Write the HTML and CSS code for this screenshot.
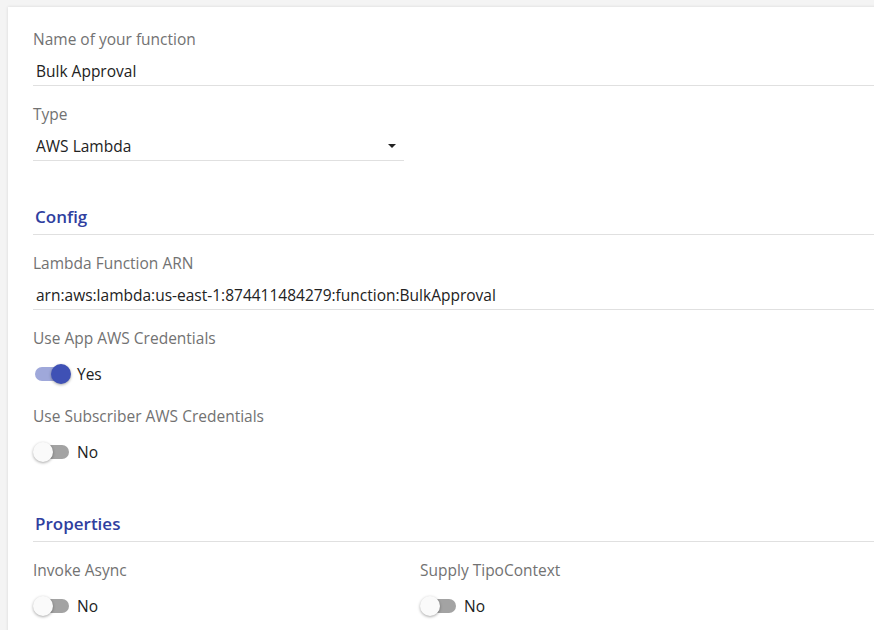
FILE: index.html
```html
<!DOCTYPE html>
<html>
<head>
<meta charset="utf-8">
<link rel="stylesheet" href="styles.css">
</head>
<body>
<div class="card">
  <div class="field">
    <div class="label">Name of your function</div>
    <div class="input full">Bulk Approval</div>
  </div>
  <div class="field">
    <div class="label">Type</div>
    <div class="input select">AWS Lambda<span class="caret"></span></div>
  </div>

  <div class="section">Config</div>
  <div class="field">
    <div class="label">Lambda Function ARN</div>
    <div class="input full">arn:aws:lambda:us-east-1:874411484279:function:BulkApproval</div>
  </div>
  <div class="field">
    <div class="label">Use App AWS Credentials</div>
    <div class="toggle-row"><span class="toggle on"><span class="thumb"></span></span><span class="tval">Yes</span></div>
  </div>
  <div class="field">
    <div class="label">Use Subscriber AWS Credentials</div>
    <div class="toggle-row"><span class="toggle"><span class="thumb"></span></span><span class="tval">No</span></div>
  </div>

  <div class="section props">Properties</div>
  <div class="cols">
    <div class="field col">
      <div class="label">Invoke Async</div>
      <div class="toggle-row"><span class="toggle"><span class="thumb"></span></span><span class="tval">No</span></div>
    </div>
    <div class="field col">
      <div class="label">Supply TipoContext</div>
      <div class="toggle-row"><span class="toggle"><span class="thumb"></span></span><span class="tval">No</span></div>
    </div>
  </div>
</div>
</body>
</html>
```

FILE: styles.css
```css
html, body {
  margin: 0;
  padding: 0;
  background: #f4f4f4;
  font-family: "Open Sans", "Noto Sans", sans-serif;
  overflow: hidden;
}
.card {
  margin: 7px 0 0 8px;
  background: #fff;
  box-shadow: 0 0 3px rgba(0,0,0,0.12);
  padding: 22px 0 40px 25px;
  width: 900px;
  height: 700px;
}
.field {
  display: flex;
  flex-direction: column;
}
.label {
  font-size: 15.5px;
  font-weight: 500;
  color: #727272;
  line-height: 20px;
  height: 20px;
}
.input {
  font-size: 15.5px;
  color: #222;
  line-height: 20px;
  margin-top: 8px;
  padding: 4px 0 4px 3px;
  border-bottom: 1px solid #e0e0e0;
  margin-bottom: 18px;
  position: relative;
}
.full { width: 840px; }
.select { width: 368px; }
.caret {
  position: absolute;
  right: 8px;
  top: 12px;
  width: 0;
  height: 0;
  border-left: 4px solid transparent;
  border-right: 4px solid transparent;
  border-top: 4px solid #222;
}
.section {
  margin-top: 27px;
  color: #303f9f;
  font-weight: 600;
  font-size: 17px;
  line-height: 22px;
  padding: 0 0 6px 2px;
  border-bottom: 1px solid #e0e0e0;
  width: 850px;
  margin-bottom: 18px;
}
.props { margin-top: 29px; }
.toggle-row {
  display: flex;
  align-items: center;
  height: 24px;
  margin-top: 14px;
  margin-bottom: 20px;
}
.toggle {
  position: relative;
  width: 34px;
  height: 14px;
  border-radius: 7px;
  background: #a3a3a3;
  margin-left: 2px;
}
.thumb {
  position: absolute;
  left: -2px;
  top: -3px;
  width: 20px;
  height: 20px;
  border-radius: 50%;
  background: #fafafa;
  box-shadow: 0 1px 3px rgba(0,0,0,0.35);
}
.toggle.on { background: #9fa8da; }
.toggle.on .thumb {
  left: 16px;
  background: #3f51b5;
}
.tval {
  font-size: 15.5px;
  color: #222;
  margin-left: 8px;
}
.cols {
  display: flex;
}
.col { width: 387px; }
```
